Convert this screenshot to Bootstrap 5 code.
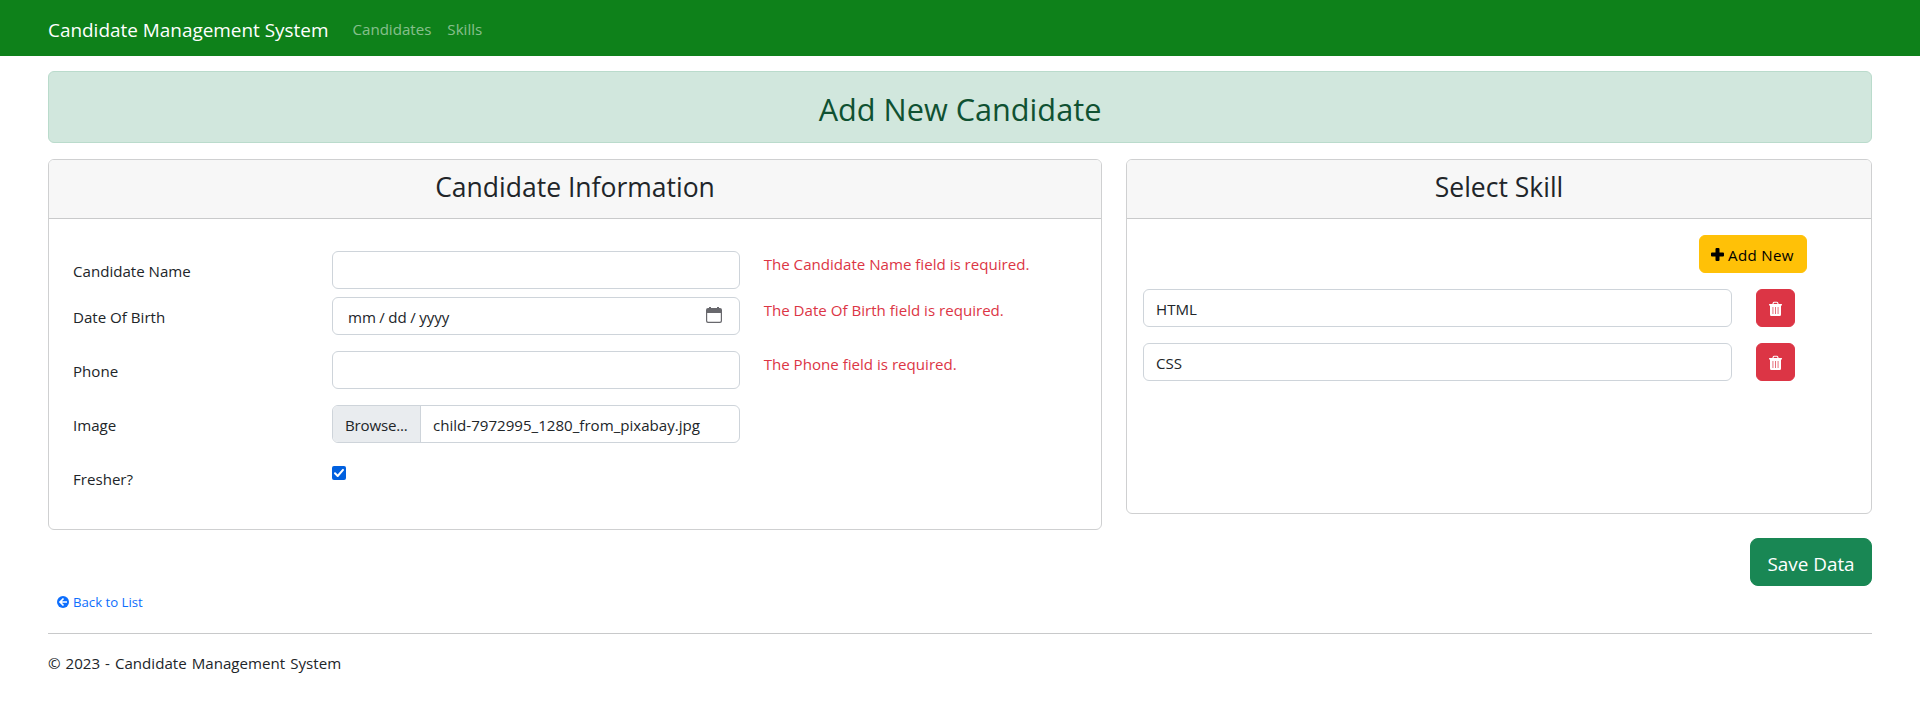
<!DOCTYPE html>
<html lang="en">
<head>
<meta charset="utf-8">
<title>Add New Candidate</title>
<link href="https://cdn.jsdelivr.net/npm/bootstrap@5.3.0/dist/css/bootstrap.min.css" rel="stylesheet">
<style>
body{font-family:"Open Sans","Noto Sans",sans-serif;font-size:15.1px;line-height:24px;color:#212529;background:#fff}
.top-bar{background:#0e811a;height:56px}
.top-bar .navbar-brand{font-size:18.93px;line-height:30px;margin-right:16px;padding:7px 0 4px}
.top-bar .nav-link{color:rgba(255,255,255,.5);padding:9px 8px 7px}
.page-alert{background:#d1e7dd;border-color:#badbcc;color:#0f5132;margin-top:15px}
.page-alert h2{font-size:30.7px;line-height:38.4px;color:#0f5132;padding-top:2px;height:38.4px}
.card{border-color:#cfd0d1}
.card-header{background:#f7f7f7;border-color:#c9cacb}
.card-header h3{font-size:26.5px;line-height:33.6px;padding-top:3px;margin-bottom:5px}
.form-body{padding:32px 16px 32px 24px}
.form-control,.btn,.col-form-label{font-size:15.1px;line-height:24px}
.form-control{height:38px;border-color:#ced4da;background:#fff}
.col-form-label{padding:8px 0 6px}
.form-control,.btn{padding-top:7px;padding-bottom:5px}
.err{color:#dc3545;padding-top:1px}
.date-field{padding-left:15px;padding-right:17px}
.date-text{word-spacing:-.5px}
.date-icon{margin-top:2px}
.pick{background:#e9ecef;border-right:1px solid #ced4da;width:88px;letter-spacing:-.2px}
.file-text{padding-top:7px}
.tick{width:14px;height:14px;margin-top:7px}
.skill-card{height:355px}
.btn-warning{width:108px;padding-left:11px;padding-right:0;color:#000;letter-spacing:.35px}
.btn-danger{width:39px;height:38px;padding:2px 0 0}
.btn-save{font-size:18.9px;line-height:30px;height:48px;width:122px;padding:10px 0 6px;border-radius:8px}
.back-link{font-size:13.2px;line-height:21px;padding:6px 9px 4px;color:#0d6efd}
.rule{border-top:1px solid #c8c9ca;opacity:1}
.foot-text{padding-top:1px;word-spacing:1px;letter-spacing:.02px}
svg{display:block;flex:none}
</style>
</head>
<body>
<svg width="0" height="0" class="position-absolute"><symbol id="trash" viewBox="0 0 13 16"><path fill="#fff" fill-rule="evenodd" d="M.500 3H3.300L4 1.300Q4.300.700 5 .700h3q.700 0 1 .6L9.700 3h2.800q.5 0 .5.500v.500q0 .5-.5.500H12v9q0 1.500-1.300 1.500H2.300Q1 15 1 13.500v-9H.500Q0 4.500 0 4v-.500Q0 3 .500 3zM4.500 3h4L8 1.800H5zM3.600 6v7h.700V6zm2.550 0v7h.700V6zm2.550 0v7h.700V6z"/></symbol></svg>
<nav class="navbar navbar-expand navbar-dark top-bar px-5 py-0">
  <a class="navbar-brand" href="#">Candidate Management System</a>
  <div class="navbar-nav">
    <a class="nav-link" href="#">Candidates</a>
    <a class="nav-link" href="#">Skills</a>
  </div>
</nav>
<main class="container-fluid px-5">
  <div class="alert page-alert text-center mb-3 p-3"><h2 class="mb-0">Add New Candidate</h2></div>
  <div class="row">
    <div class="col-7">
      <div class="card">
        <div class="card-header text-center"><h3>Candidate Information</h3></div>
        <div class="form-body">
          <div class="row mb-2">
            <label class="col-3 col-form-label ps-2"><span class="ps-1">Candidate Name</span></label>
            <div class="col-5"><input type="text" class="form-control"></div>
            <div class="col-4 err">The Candidate Name field is required.</div>
          </div>
          <div class="row mb-3">
            <label class="col-3 col-form-label ps-2"><span class="ps-1">Date Of Birth</span></label>
            <div class="col-5">
              <div class="form-control date-field d-flex justify-content-between">
                <span class="date-text">mm / dd / yyyy</span>
                <svg class="date-icon" width="16" height="16" viewBox="0 0 16 16"><path fill="#68686d" d="M3 0h2v1h6V0h2v1h1a2 2 0 0 1 2 2v11a2 2 0 0 1-2 2H2a2 2 0 0 1-2-2V3a2 2 0 0 1 2-2h1zM1.200 6v7.800a1 1 0 0 0 1 1h11.600a1 1 0 0 0 1-1V6z" fill-rule="evenodd"/></svg>
              </div>
            </div>
            <div class="col-4 err">The Date Of Birth field is required.</div>
          </div>
          <div class="row mb-3">
            <label class="col-3 col-form-label ps-2"><span class="ps-1">Phone</span></label>
            <div class="col-5"><input type="text" class="form-control"></div>
            <div class="col-4 err">The Phone field is required.</div>
          </div>
          <div class="row mb-3">
            <label class="col-3 col-form-label ps-2"><span class="ps-1">Image</span></label>
            <div class="col-5">
              <div class="form-control d-flex p-0 overflow-hidden">
                <span class="pick file-text ps-2"><span class="ps-1">Browse...</span></span>
                <span class="file-text ps-2"><span class="ps-1">child-7972995_1280_from_pixabay.jpg</span></span>
              </div>
            </div>
          </div>
          <div class="row">
            <label class="col-3 col-form-label ps-2"><span class="ps-1">Fresher?</span></label>
            <div class="col-5"><svg class="tick" viewBox="0 0 14 14"><rect width="14" height="14" rx="2" fill="#0060df"/><path d="M3 7.300l2.700 2.700L11 3.900" fill="none" stroke="#fff" stroke-width="2" stroke-linecap="round" stroke-linejoin="round"/></svg></div>
          </div>
        </div>
      </div>
    </div>
    <div class="col-5">
      <div class="card skill-card">
        <div class="card-header text-center"><h3>Select Skill</h3></div>
        <div class="card-body">
          <div class="d-flex justify-content-end pe-5 mb-3">
            <button class="btn btn-warning d-flex align-items-center gap-1"><svg width="13" height="13" viewBox="0 0 13 13"><path d="M5.500 0h2a1 1 0 0 1 1 1v3.500H12a1 1 0 0 1 1 1v2a1 1 0 0 1-1 1H8.500V12a1 1 0 0 1-1 1h-2a1 1 0 0 1-1-1V8.500H1a1 1 0 0 1-1-1v-2a1 1 0 0 1 1-1h3.500V1a1 1 0 0 1 1-1z"/></svg><span>Add New</span></button>
          </div>
          <div class="row mb-3">
            <div class="col-10"><div class="form-control">HTML</div></div>
            <div class="col-2"><button class="btn btn-danger d-flex align-items-center justify-content-center"><svg width="13" height="16"><use href="#trash"/></svg></button></div>
          </div>
          <div class="row">
            <div class="col-10"><div class="form-control">CSS</div></div>
            <div class="col-2"><button class="btn btn-danger d-flex align-items-center justify-content-center"><svg width="13" height="16"><use href="#trash"/></svg></button></div>
          </div>
        </div>
      </div>
    </div>
  </div>
  <div class="d-flex justify-content-end mt-2"><button class="btn btn-success btn-save">Save Data</button></div>
  <a href="#" class="back-link d-inline-flex align-items-center gap-1 text-decoration-none"><svg width="12" height="12" viewBox="0 0 12 12"><circle cx="6" cy="6" r="6" fill="#0d6efd"/><path d="M6.500 2.500L3 6l3.500 3.500M3.500 6H10" fill="none" stroke="#fff" stroke-width="1.700"/></svg><span>Back to List</span></a>
</main>
<footer class="px-5"><hr class="rule mt-3 mb-3"><div class="foot-text">© 2023 - Candidate Management System</div></footer>
<script src="https://cdn.jsdelivr.net/npm/bootstrap@5.3.0/dist/js/bootstrap.bundle.min.js"></script>
</body>
</html>
